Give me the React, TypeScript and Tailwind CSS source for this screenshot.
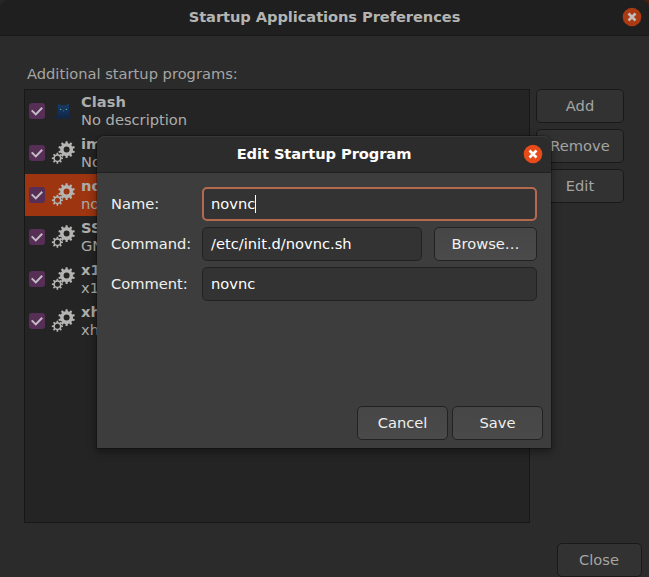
import React from "react";
import clsx from "clsx";

type Program = {
	name: string;
	description: string;
	icon: "cat" | "gears";
	selected?: boolean;
};

const programs: Program[] = [
	{ name: "Clash", description: "No description", icon: "cat" },
	{ name: "im-launch", description: "No description", icon: "gears" },
	{ name: "novnc", description: "novnc", icon: "gears", selected: true },
	{ name: "SSH Key Agent", description: "GNOME Keyring: SSH Agent", icon: "gears" },
	{ name: "x11vnc", description: "x11vnc", icon: "gears" },
	{ name: "xhost", description: "xhost", icon: "gears" },
];

// Outline of a cog with its hole cut out (evenodd)
const gearPath = (
	cx: number,
	cy: number,
	outer: number,
	body: number,
	hole: number,
	teeth: number
) => {
	const step = (Math.PI * 2) / teeth;
	const points: string[] = [];
	for (let i = 0; i < teeth; i++) {
		const a = i * step;
		[
			[body, -0.3],
			[outer, -0.18],
			[outer, 0.18],
			[body, 0.3],
		].forEach(([r, offset]) => {
			const t = a + offset * step;
			points.push(
				`${(cx + r * Math.sin(t)).toFixed(2)} ${(cy - r * Math.cos(t)).toFixed(2)}`
			);
		});
	}
	return `M${points.join("L")}ZM${cx - hole} ${cy}a${hole} ${hole} 0 1 0 ${hole * 2} 0a${hole} ${hole} 0 1 0 ${-hole * 2} 0Z`;
};

const GearsIcon = () => (
	<svg width="24" height="24" viewBox="0 0 24 24" fill="#b4b4b2" fillRule="evenodd">
		<path d={gearPath(15.6, 8.6, 8.4, 6.4, 3, 10)} />
		<path d={gearPath(6.4, 17.2, 5.6, 4, 2.5, 8)} />
	</svg>
);

const CatIcon = () => (
	<svg width="24" height="24" viewBox="0 0 24 24">
		<defs>
			<linearGradient id="cat" x1="0" y1="0" x2="0" y2="1">
				<stop offset="0" stopColor="#163e6b" />
				<stop offset="1" stopColor="#102544" />
			</linearGradient>
		</defs>
		<g transform="translate(1 0)">
			<path
				d="M6 4.2 8.6 6.2h5.6L16.8 4.2l.5 8.8 1.3 6.5H4.5c-2 0-3.2-.9-2.6-2.2.7.5 1.8.9 3 .6L5.7 12Z"
				fill="url(#cat)"
			/>
			<circle cx="8.7" cy="10.3" r=".65" fill="#a3b4c5" />
			<circle cx="14.3" cy="10.3" r=".65" fill="#a3b4c5" />
			<path d="m10.8 11.6.7.5.7-.5" stroke="#8396ac" strokeWidth=".5" fill="none" />
		</g>
	</svg>
);

const Checkbox = () => (
	<span className="flex size-4 items-center justify-center rounded-[3px] bg-[#572e56]">
		<svg width="16" height="16" viewBox="0 0 16 16" fill="none">
			<path d="m2.7 7.4 4.1 4 6.4-6.6" stroke="#c5bdc5" strokeWidth="2" />
		</svg>
	</span>
);

const CloseIcon = ({ dim }: { dim?: boolean }) => (
	<svg width="20" height="20" viewBox="0 0 20 20" fill="none">
		<circle cx="10" cy="10" r="9.3" fill={dim ? "#ab3912" : "#e64b19"} />
		<path
			d="m6.5 6.5 7 7m0-7-7 7"
			stroke={dim ? "#c4bcb9" : "#fff"}
			strokeWidth="2.6"
		/>
	</svg>
);

const Button = ({
	children,
	className,
	dim,
}: {
	children: React.ReactNode;
	className?: string;
	dim?: boolean;
}) => (
	<button
		className={clsx(
			"flex h-[34px] shrink-0 items-center justify-center rounded-[5px] border",
			dim
				? "border-[#191919] bg-[#323232] text-[#a5a5a3]"
				: "border-[#222] bg-gradient-to-b from-[#464646] to-[#4a4a4a] text-[#f0f0ee]",
			className
		)}
	>
		{children}
	</button>
);

const Field = ({
	label,
	children,
}: {
	label: string;
	children: React.ReactNode;
}) => (
	<div className="flex h-[34px] items-center">
		<label className="w-[91px] shrink-0">{label}</label>
		{children}
	</div>
);

const inputStyle =
	"flex h-[34px] items-center rounded-[5px] border border-[#222] bg-[#333] px-2 text-white";

const EditDialog = () => (
	<div className="absolute left-[97px] top-[136px] flex h-[312px] w-[454px] flex-col rounded-t-[8px] bg-[#3d3d3d] text-[#f0f0ee] shadow-[0_3px_9px_1px_rgba(0,0,0,0.4),0_0_0_1px_rgba(0,0,0,0.22)]">
		<header className="relative flex h-[37px] items-center justify-center rounded-t-[8px] border-b border-[#202020] bg-[#2c2c2c] font-bold text-white shadow-[inset_0_1px_0_#383838]">
			<h2 className="tracking-[-0.08px]">Edit Startup Program</h2>
			<span className="absolute right-2 top-2">
				<CloseIcon />
			</span>
		</header>
		<div className="flex flex-col gap-1.5 px-3.5 pt-3.5">
			<Field label="Name:">
				<div className="flex h-[34px] flex-1 items-center rounded-[5px] border-2 border-[#b56a50] bg-[#333] px-[7px] text-white">
					novnc
					<span className="h-[18px] w-px bg-white" />
				</div>
			</Field>
			<Field label="Command:">
				<div className={clsx(inputStyle, "w-[220px]")}>/etc/init.d/novnc.sh</div>
				<Button className="ml-3 w-[103px]">Browse…</Button>
			</Field>
			<Field label="Comment:">
				<div className={clsx(inputStyle, "flex-1")}>novnc</div>
			</Field>
		</div>
		<footer className="mt-auto flex justify-end gap-1 p-2">
			<Button className="w-[91px]">Cancel</Button>
			<Button className="w-[91px]">Save</Button>
		</footer>
	</div>
);

const App = () => {
	return (
		<div className="h-[577px] w-[649px] overflow-hidden bg-gradient-to-r from-[#262626] to-[#46200f] font-['DejaVu_Sans',sans-serif] text-[14.667px] leading-[18px]">
			<main className="relative flex h-[577px] flex-col rounded-t-[8px] bg-[#2b2b2b] text-[#a5a5a3]">
				<header className="relative flex h-9 shrink-0 items-center justify-center rounded-t-[8px] border-b border-[#191919] bg-[#1f1f1f] pb-px font-bold text-[#b4b4b2]">
					<h1 className="tracking-[-0.08px]">Startup Applications Preferences</h1>
					<span className="absolute right-[7px] top-[7px]">
						<CloseIcon dim />
					</span>
				</header>
				<p className="ml-[27px] mt-[29px]">Additional startup programs:</p>
				<div className="ml-6 mt-1.5 flex gap-1.5">
					<ul className="h-[434px] w-[506px] border border-[#171717] bg-[#242424]">
						{programs.map((program) => (
							<li
								key={program.name}
								className={clsx(
									"flex h-[42px] items-center pl-1",
									program.selected && "bg-[#9c3510]"
								)}
							>
								<Checkbox />
								<span className="ml-1.5 mr-[6px]">
									{program.icon === "cat" ? <CatIcon /> : <GearsIcon />}
								</span>
								<div className="text-[#adadab]">
									<p className="font-bold">{program.name}</p>
									<p>{program.description}</p>
								</div>
							</li>
						))}
					</ul>
					<div className="flex flex-col gap-1.5">
						<Button dim className="w-[88px]">
							Add
						</Button>
						<Button dim className="w-[88px]">
							Remove
						</Button>
						<Button dim className="w-[88px]">
							Edit
						</Button>
					</div>
				</div>
				<Button dim className="ml-auto mr-[7px] mt-5 w-[85px] pr-px">
					Close
				</Button>
				<EditDialog />
			</main>
		</div>
	);
};

export default App;
